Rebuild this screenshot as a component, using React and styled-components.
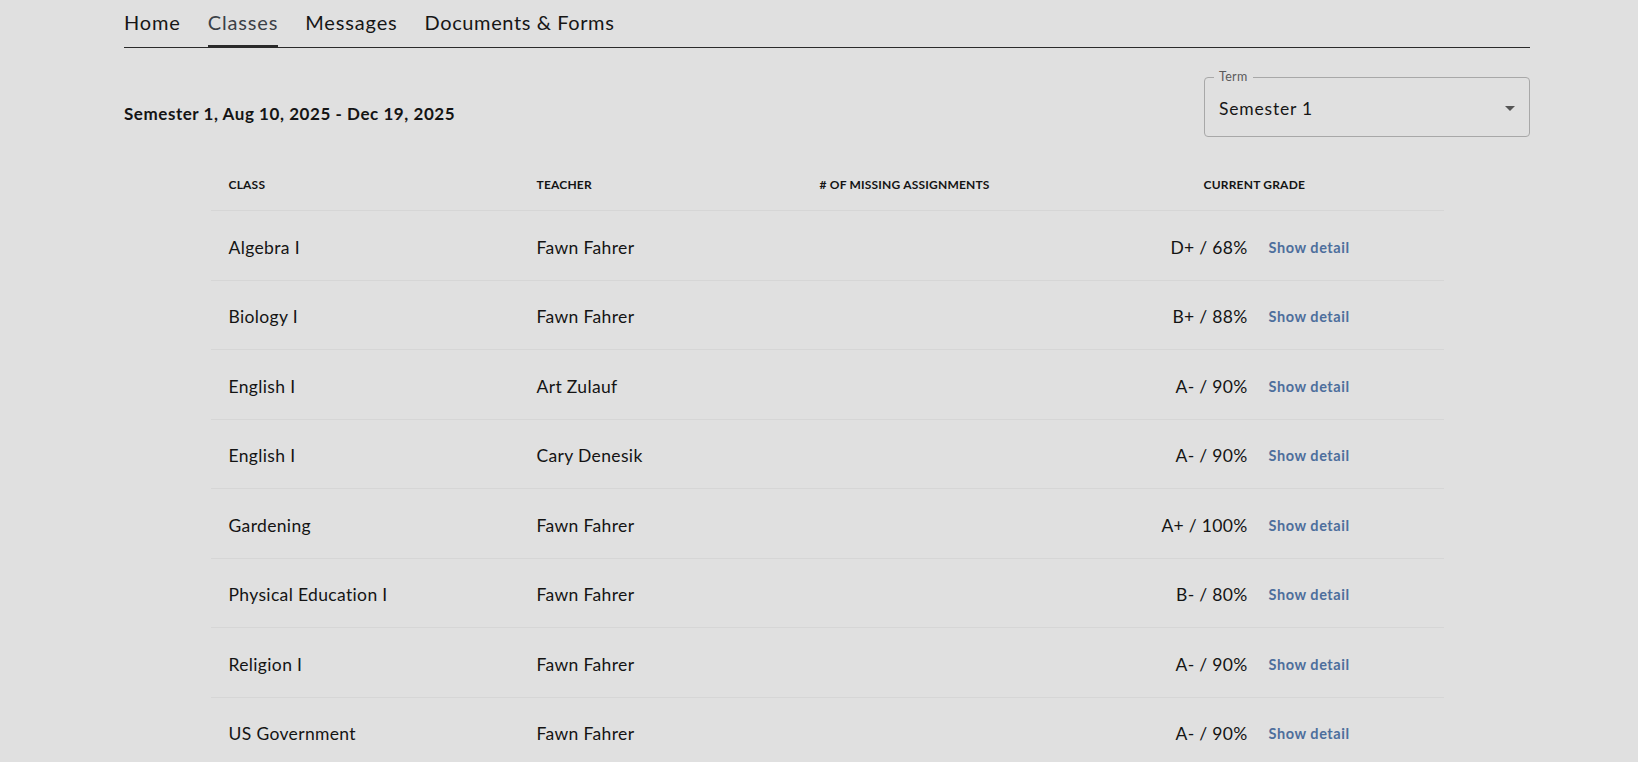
import React from "react";
import styled, { createGlobalStyle } from "styled-components";

const GlobalStyle = createGlobalStyle`
  html, body {
    margin: 0;
    padding: 0;
    background: #e0e0e0;
  }
  body {
    font-family: Lato, "Open Sans", sans-serif;
    color: #111;
  }
`;

const Page = styled.div`
  width: 1406px;
  margin-left: 124px;
`;

const TabBar = styled.nav`
  display: flex;
  gap: 27px;
  height: 48px;
  border-bottom: 1px solid #2b2b2b;
  box-sizing: border-box;
`;

const Tab = styled.a`
  display: flex;
  align-items: center;
  padding-bottom: 2px;
  box-sizing: border-box;
  font-size: 20px;
  color: ${(p) => (p.$active ? "#3b4047" : "#161616")};
  border-bottom: 3px solid ${(p) => (p.$active ? "#2a2a2a" : "transparent")};
  height: 48px;
  margin-bottom: -1px;
  text-decoration: none;
  letter-spacing: ${(p) => (p.$wide ? "0.6px" : "0.85px")};
  cursor: pointer;
`;

const TopRow = styled.div`
  display: flex;
  justify-content: space-between;
  align-items: flex-start;
  padding-top: 29px;
`;

const TermTitle = styled.h2`
  margin: 0;
  padding-top: 25px;
  font-size: 17px;
  line-height: 24px;
  font-weight: 700;
  letter-spacing: 0.55px;
  color: #141414;
`;

const SelectBox = styled.div`
  position: relative;
  width: 326px;
  height: 60px;
  box-sizing: border-box;
  border: 1px solid #a8a8a8;
  border-radius: 4px;
  display: flex;
  align-items: center;
  justify-content: space-between;
  padding: 0 14px 0 14px;
`;

const SelectLabel = styled.span`
  position: absolute;
  top: -9px;
  left: 9px;
  padding: 0 5px;
  background: #e0e0e0;
  font-size: 12.5px;
  line-height: 16px;
  letter-spacing: 0.3px;
  color: #5a5a5a;
`;

const SelectValue = styled.span`
  font-size: 17.5px;
  letter-spacing: 0.8px;
  color: #161616;
  padding-top: 2px;
`;

const Caret = styled.span`
  width: 0;
  height: 0;
  border-left: 5.5px solid transparent;
  border-right: 5.5px solid transparent;
  border-top: 5px solid #555;
  margin-top: 2px;
`;

const Table = styled.div`
  width: 1233px;
  margin: 23px auto 0;
`;

const columns = "308px 283px 384px 1fr";

const HeaderRow = styled.div`
  display: grid;
  grid-template-columns: ${columns};
  height: 51px;
  align-items: center;
  border-bottom: 1px solid #d6d6d6;
  box-sizing: border-box;
`;

const HeadCell = styled.div`
  padding-left: 18px;
  font-size: 12px;
  font-weight: 700;
  color: #141414;
  text-transform: uppercase;
  letter-spacing: 0.2px;
  padding-bottom: 1px;
`;

const Row = styled.div`
  display: grid;
  grid-template-columns: ${columns};
  height: 69.5px;
  align-items: center;
  border-bottom: 1px solid #d6d6d6;
  box-sizing: border-box;
`;

const Cell = styled.div`
  padding-left: 18px;
  padding-top: 4px;
  font-size: 17.5px;
  letter-spacing: 0.35px;
  color: #141414;
  white-space: nowrap;
`;

const GradeCell = styled.div`
  display: flex;
  align-items: center;
  gap: 21px;
  margin-left: -91px;
  padding-top: 4px;
`;

const GradeValue = styled.span`
  width: 153px;
  text-align: right;
  font-size: 17.5px;
  letter-spacing: 0.3px;
  color: #141414;
  white-space: nowrap;
`;

const DetailLink = styled.a`
  font-size: 14.5px;
  font-weight: 700;
  letter-spacing: 0.55px;
  color: #4d6e9c;
  text-decoration: none;
  cursor: pointer;
  white-space: nowrap;
`;

const rows = [
  ["Algebra I", "Fawn Fahrer", "D+ / 68%"],
  ["Biology I", "Fawn Fahrer", "B+ / 88%"],
  ["English I", "Art Zulauf", "A- / 90%"],
  ["English I", "Cary Denesik", "A- / 90%"],
  ["Gardening", "Fawn Fahrer", "A+ / 100%"],
  ["Physical Education I", "Fawn Fahrer", "B- / 80%"],
  ["Religion I", "Fawn Fahrer", "A- / 90%"],
  ["US Government", "Fawn Fahrer", "A- / 90%"],
];

export default function App() {
  return (
    <>
      <GlobalStyle />
      <Page>
        <TabBar>
          <Tab>Home</Tab>
          <Tab $active>Classes</Tab>
          <Tab>Messages</Tab>
          <Tab $wide>Documents &amp; Forms</Tab>
        </TabBar>
        <TopRow>
          <TermTitle>Semester 1, Aug 10, 2025 - Dec 19, 2025</TermTitle>
          <SelectBox>
            <SelectLabel>Term</SelectLabel>
            <SelectValue>Semester 1</SelectValue>
            <Caret />
          </SelectBox>
        </TopRow>
        <Table>
          <HeaderRow>
            <HeadCell>Class</HeadCell>
            <HeadCell>Teacher</HeadCell>
            <HeadCell># of missing assignments</HeadCell>
            <HeadCell>Current grade</HeadCell>
          </HeaderRow>
          {rows.map(([cls, teacher, grade], i) => (
            <Row key={i}>
              <Cell>{cls}</Cell>
              <Cell>{teacher}</Cell>
              <Cell />
              <GradeCell>
                <GradeValue>{grade}</GradeValue>
                <DetailLink>Show detail</DetailLink>
              </GradeCell>
            </Row>
          ))}
        </Table>
      </Page>
    </>
  );
}
